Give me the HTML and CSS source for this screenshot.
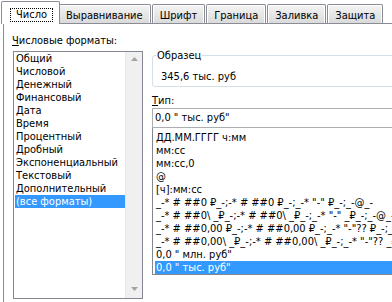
FILE: index.html
```html
<!DOCTYPE html>
<html lang="ru">
<head>
    <meta charset="UTF-8">
    <title>Формат ячеек</title>
    <link rel="stylesheet" href="styles.css">
</head>
<body>
    <div class="tabs">
        <div class="tab active"><span class="focus">Число</span></div>
        <div class="tab">Выравнивание</div>
        <div class="tab">Шрифт</div>
        <div class="tab">Граница</div>
        <div class="tab">Заливка</div>
        <div class="tab">Защита</div>
    </div>
    <div class="panel">
        <div class="leftCol">
            <div class="label formatsLabel"><u>Ч</u>исловые форматы:</div>
            <div class="listBox">
                <ul class="items">
                    <li>Общий</li>
                    <li>Числовой</li>
                    <li>Денежный</li>
                    <li>Финансовый</li>
                    <li>Дата</li>
                    <li>Время</li>
                    <li>Процентный</li>
                    <li>Дробный</li>
                    <li>Экспоненциальный</li>
                    <li>Текстовый</li>
                    <li>Дополнительный</li>
                    <li class="selected">(все форматы)</li>
                </ul>
                <div class="scrollBar">
                    <svg width="7" height="4" viewBox="0 0 7 4"><polygon points="0,4 7,4 3.5,0" fill="#a3a3a3"/></svg>
                    <svg width="7" height="4" viewBox="0 0 7 4"><polygon points="0,0 7,0 3.5,4" fill="#a3a3a3"/></svg>
                </div>
            </div>
        </div>
        <div class="rightCol">
            <fieldset class="sample">
                <legend>Образец</legend>
                <div class="sampleValue">345,6 тыс. руб</div>
            </fieldset>
            <div class="label typeLabel"><u>Т</u>ип:</div>
            <div class="typeInput">0,0 " тыс. руб"</div>
            <ul class="typeList">
                <li>ДД.ММ.ГГГГ ч:мм</li>
                <li>мм:сс</li>
                <li>мм:сс,0</li>
                <li>@</li>
                <li>[ч]:мм:сс</li>
                <li>_-* # ##0 ₽_-;-* # ##0 ₽_-;_-* "-" ₽_-;_-@_-</li>
                <li>_-* # ##0\ _₽_-;-* # ##0\ _₽_-;_-* "-" _₽_-;_-@_-</li>
                <li>_-* # ##0,00 ₽_-;-* # ##0,00 ₽_-;_-* "-"?? ₽_-;_-@_-</li>
                <li>_-* # ##0,00\ _₽_-;-* # ##0,00\ _₽_-;_-* "-"?? _₽_-;_-@_-</li>
                <li>0,0 " млн. руб"</li>
                <li class="selected">0,0 " тыс. руб"</li>
            </ul>
        </div>
    </div>
</body>
</html>
```

FILE: styles.css
```css
* {
    font-family: "DejaVu Sans Condensed", "Liberation Sans", sans-serif;
    font-size: 11px;
    margin: 0;
    padding: 0;
    box-sizing: border-box;
}
body {
    width: 392px;
    height: 302px;
    overflow: hidden;
    background: #fff;
    color: #000;
}

/* tab strip */
.tabs {
    display: flex;
    align-items: flex-end;
    height: 23px;
    padding-left: 1px;
}
.tab {
    height: 19px;
    padding: 4px 7px 0;
    margin-right: 1px;
    line-height: 13px;
    white-space: nowrap;
    border: 1px solid #898c95;
    border-bottom: none;
    border-radius: 2px 2px 0 0;
    background: linear-gradient(#f4f4f4, #dadada);
    box-shadow: inset 1px 1px 0 #fff, inset -1px 0 0 #fff;
}
.tab.active {
    position: relative;
    z-index: 1;
    height: 23px;
    margin-bottom: -1px;
    margin-right: -2px;
    padding: 6px 6px 0 8px;
    background: #fff;
    box-shadow: none;
}
.focus {
    display: inline-block;
    padding: 0 5px;
    line-height: 12px;
    border: 1px dotted #000;
}

/* panel */
.panel {
    display: flex;
    gap: 9px;
    height: 279px;
    margin-left: 3px;
    padding-left: 8px;
    border-top: 1px solid #898c95;
    border-left: 1px solid #898c95;
}
.label {
    height: 13px;
    line-height: 13px;
    white-space: nowrap;
}
.leftCol {
    padding-top: 10px;
}
.formatsLabel {
    margin-bottom: 4px;
}
.listBox {
    display: flex;
    width: 130px;
    height: 248px;
    margin-left: 1px;
    border: 1px solid #828790;
}
.items {
    flex: 1;
    list-style: none;
    padding-left: 1px;
}
.items li,
.typeList li {
    height: 13px;
    line-height: 13px;
    padding-left: 1px;
    white-space: nowrap;
}
.selected {
    background: #3399ff;
    color: #fff;
}
.scrollBar {
    display: flex;
    flex-direction: column;
    justify-content: space-between;
    align-items: center;
    width: 17px;
    padding: 5px 0 7px;
    background: #f0f0f0;
    border-left: 1px solid #e8e8e8;
}

/* right side */
.rightCol {
    width: 260px;
    flex-shrink: 0;
    padding-top: 25px;
}
.sample {
    padding: 0 3px 3px;
    border: 1px solid #d5dfe5;
    border-radius: 3px;
}
.sample legend {
    padding: 0 1px;
    line-height: 13px;
}
.sampleValue {
    padding: 8px 0 0 5px;
    line-height: 13px;
}
.typeLabel {
    margin-top: 7px;
}
.typeInput {
    height: 20px;
    margin-top: 1px;
    padding-left: 2px;
    line-height: 18px;
    border: 1px solid #abadb3;
    white-space: nowrap;
}
.typeList {
    list-style: none;
    height: 147px;
    padding: 3px 0 0 2px;
    overflow: hidden;
    border: 1px solid #828790;
    border-top: none;
}
```
